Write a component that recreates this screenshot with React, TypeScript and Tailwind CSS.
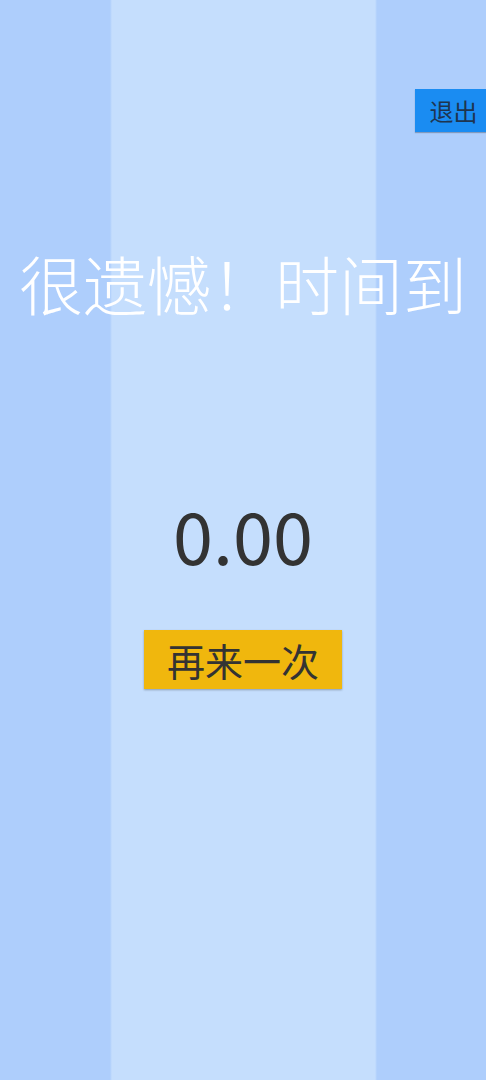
import React from "react";

export default function App() {
  return (
    <div
      className="flex h-[1080px] w-full flex-col items-center overflow-hidden bg-[linear-gradient(to_right,#aecefc_0px,#aecefc_110px,#c5defd_112px,#c5defd_375px,#aecefc_377px,#aecefc_100%)]"
      style={{ fontFamily: '"Noto Sans CJK SC", "Noto Sans", sans-serif' }}
    >
      <button className="mt-[89px] flex h-[43px] w-[71px] items-center justify-center self-end bg-[#1a8cf2] pl-[6px] text-[24px] leading-none text-[#1e3550] shadow-[0_1px_1px_rgba(0,0,0,0.25)]">
        退出
      </button>
      <h1 className="mt-[118px] whitespace-nowrap text-[64px] font-light leading-none text-white">
        很遗憾！时间到
      </h1>
      <div className="mt-[184px] text-[72px] leading-none text-[#333333]">0.00</div>
      <button className="mt-[60px] flex h-[59px] w-[198px] items-center justify-center bg-[#f0b70d] text-[38px] leading-none text-[#333333] shadow-[0_1px_2px_rgba(0,0,0,0.3)]">
        再来一次
      </button>
    </div>
  );
}
